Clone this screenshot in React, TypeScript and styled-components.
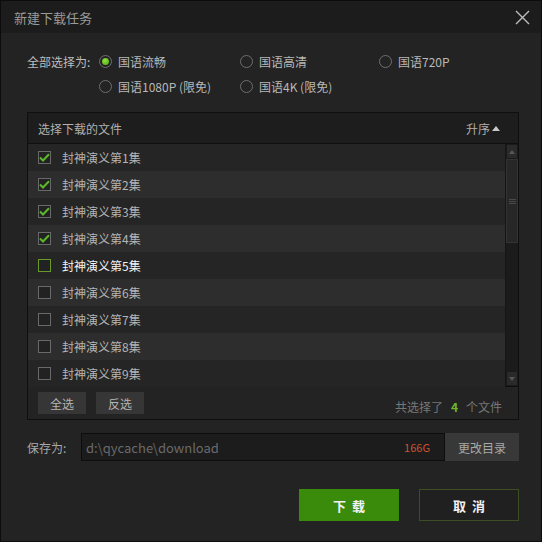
import React from 'react';
import styled, { createGlobalStyle, css } from 'styled-components';

const GlobalStyle = createGlobalStyle`
  html, body {
    margin: 0;
    padding: 0;
    background: #222;
  }
  * {
    box-sizing: border-box;
  }
`;

const FONT = `'Noto Sans CJK SC', 'Microsoft YaHei', 'Liberation Sans', sans-serif`;

const Window = styled.div`
  width: 542px;
  height: 542px;
  background: #232323;
  border: 1px solid #0c0c0c;
  font-family: ${FONT};
  font-size: 12px;
  color: #b8b8b8;
  display: flex;
  flex-direction: column;
`;

const TitleBar = styled.div`
  height: 32px;
  flex: none;
  background: #1c1c1c;
  display: flex;
  align-items: center;
  justify-content: space-between;
  padding: 0 10px 0 13px;
`;

const Title = styled.span`
  font-size: 13px;
  color: #9a9a9a;
`;

const CloseButton = styled.button`
  width: 18px;
  height: 18px;
  padding: 0;
  border: 0;
  background: transparent;
  display: flex;
  align-items: center;
  justify-content: center;
  cursor: pointer;
`;

const Body = styled.div`
  flex: 1;
  display: flex;
  flex-direction: column;
  padding: 16px 22px 0 26px;
`;

const OptionGrid = styled.div`
  display: grid;
  grid-template-columns: 72px 141px 139px auto;
  grid-auto-rows: 25px;
  align-items: center;
`;

const OptionLabel = styled.span`
  color: #bdbdbd;
  white-space: nowrap;
`;

const Option = styled.label<{ $col?: number }>`
  display: flex;
  align-items: center;
  gap: 6px;
  color: #b8b8b8;
  white-space: nowrap;
  cursor: pointer;
  ${({ $col }) =>
    $col &&
    css`
      grid-column: ${$col};
    `}
`;

const Radio = styled.span<{ $checked?: boolean }>`
  width: 13px;
  height: 13px;
  border-radius: 50%;
  border: 1.5px solid #6e6e6e;
  display: flex;
  align-items: center;
  justify-content: center;
  flex: none;
  &::after {
    content: '';
    width: 7px;
    height: 7px;
    border-radius: 50%;
    background: ${({ $checked }) =>
      $checked ? 'radial-gradient(circle at 40% 35%, #8fe040, #4ca60f)' : 'transparent'};
  }
`;

const Panel = styled.div`
  margin-top: 13px;
  border: 1px solid #0f0f0f;
  display: flex;
  flex-direction: column;
`;

const PanelHeader = styled.div`
  height: 31px;
  background: #1d1d1d;
  border-bottom: 1px solid #0f0f0f;
  display: flex;
  align-items: center;
  justify-content: space-between;
  padding: 0 18px 0 10px;
  color: #b0b0b0;
`;

const SortToggle = styled.span`
  display: flex;
  align-items: center;
  gap: 2px;
  color: #b0b0b0;
`;

const ListArea = styled.div`
  display: flex;
  height: 243px;
  border-bottom: 1px solid #0f0f0f;
`;

const FileList = styled.ul`
  flex: 1;
  list-style: none;
  margin: 0;
  padding: 0;
`;

const FileRow = styled.li<{ $alt: boolean; $hover?: boolean }>`
  height: 27px;
  display: flex;
  align-items: center;
  gap: 11px;
  padding-left: 10px;
  background: ${({ $alt }) => ($alt ? '#2d2d2d' : '#252525')};
  color: ${({ $hover }) => ($hover ? '#f4f4f4' : '#b4b4b4')};
`;

const CheckBox = styled.span<{ $hover?: boolean }>`
  width: 13px;
  height: 13px;
  border: 1px solid ${({ $hover }) => ($hover ? '#6a9a2a' : '#696969')};
  background: #222;
  display: flex;
  align-items: center;
  justify-content: center;
  flex: none;
`;

const ScrollBar = styled.div`
  width: 13px;
  flex: none;
  background: #1b1b1b;
  border-left: 1px solid #151515;
  display: flex;
  flex-direction: column;
`;

const ScrollArrow = styled.div`
  height: 15px;
  background: #2a2a2a;
  border: 1px solid #1a1a1a;
  display: flex;
  align-items: center;
  justify-content: center;
`;

const ScrollThumb = styled.div`
  height: 84px;
  background: #272727;
  border: 1px solid #333;
  display: flex;
  align-items: center;
  justify-content: center;
`;

const ScrollTrack = styled.div`
  flex: 1;
`;

const PanelFooter = styled.div`
  height: 32px;
  display: flex;
  align-items: center;
  gap: 10px;
  padding: 0 16px 0 10px;
`;

const SmallButton = styled.button`
  height: 22px;
  width: 48px;
  border: 0;
  background: #363636;
  color: #b4b4b4;
  font-family: ${FONT};
  font-size: 12px;
  padding: 0;
  cursor: pointer;
`;

const SelectedCount = styled.span`
  margin-left: auto;
  color: #777;
  padding-top: 6px;
`;

const Count = styled.b`
  color: #6fb82a;
  margin: 0 8px;
`;

const SaveRow = styled.div`
  margin-top: 13px;
  display: flex;
  align-items: center;
  height: 28px;
`;

const SaveLabel = styled.span`
  width: 54px;
  flex: none;
  color: #a8a8a8;
`;

const PathBox = styled.div`
  flex: 1;
  height: 28px;
  background: #1c1c1c;
  border: 1px solid #0d0d0d;
  display: flex;
  align-items: center;
  justify-content: space-between;
  padding: 0 14px 0 4px;
  font-size: 13px;
  color: #6a6a6a;
`;

const DiskSpace = styled.span`
  color: #d0522e;
  font-size: 11px;
`;

const ChangeDirButton = styled.button`
  width: 74px;
  height: 28px;
  flex: none;
  border: 0;
  background: #383838;
  color: #a8a8a8;
  font-family: ${FONT};
  font-size: 12px;
  padding: 0;
  cursor: pointer;
`;

const Actions = styled.div`
  margin-top: 28px;
  display: flex;
  justify-content: flex-end;
  gap: 20px;
`;

const ActionButton = styled.button<{ $primary?: boolean }>`
  width: 100px;
  height: 32px;
  font-family: ${FONT};
  font-size: 13px;
  font-weight: bold;
  letter-spacing: 6px;
  text-indent: 6px;
  color: #f2f2f2;
  cursor: pointer;
  ${({ $primary }) =>
    $primary
      ? css`
          background: #3a8a0c;
          border: 1px solid #3a8a0c;
        `
      : css`
          background: #202020;
          border: 1px solid #3d4f22;
        `}
`;

const files = Array.from({ length: 9 }, (_, i) => ({
  name: `封神演义第${i + 1}集`,
  checked: i < 4,
}));

const Check = () => (
  <svg width="11" height="9" viewBox="0 0 11 9">
    <path d="M1 4.5 L4 7.5 L10 1.2" fill="none" stroke="#5cb82a" strokeWidth="2" />
  </svg>
);

const App = (): React.ReactElement => {
  return (
    <React.Fragment>
      <GlobalStyle />
      <Window>
        <TitleBar>
          <Title>新建下载任务</Title>
          <CloseButton aria-label="close">
            <svg width="15" height="15" viewBox="0 0 15 15">
              <path d="M1 1 L14 14 M14 1 L1 14" stroke="#bdbdbd" strokeWidth="1.4" />
            </svg>
          </CloseButton>
        </TitleBar>
        <Body>
          <OptionGrid>
            <OptionLabel>全部选择为:</OptionLabel>
            <Option>
              <Radio $checked />
              国语流畅
            </Option>
            <Option>
              <Radio />
              国语高清
            </Option>
            <Option>
              <Radio />
              国语720P
            </Option>
            <Option $col={2}>
              <Radio />
              国语1080P (限免)
            </Option>
            <Option>
              <Radio />
              国语4K (限免)
            </Option>
          </OptionGrid>

          <Panel>
            <PanelHeader>
              <span>选择下载的文件</span>
              <SortToggle>
                升序
                <svg width="8" height="5" viewBox="0 0 8 5">
                  <path d="M0 5 L4 0 L8 5 Z" fill="#c8c8c8" />
                </svg>
              </SortToggle>
            </PanelHeader>
            <ListArea>
              <FileList>
                {files.map((f, i) => (
                  <FileRow key={f.name} $alt={i % 2 === 1} $hover={i === 4}>
                    <CheckBox $hover={i === 4}>{f.checked && <Check />}</CheckBox>
                    {f.name}
                  </FileRow>
                ))}
              </FileList>
              <ScrollBar>
                <ScrollArrow>
                  <svg width="6" height="4" viewBox="0 0 6 4">
                    <path d="M0 4 L3 0 L6 4 Z" fill="#555" />
                  </svg>
                </ScrollArrow>
                <ScrollThumb>
                  <svg width="7" height="5" viewBox="0 0 7 5">
                    <path d="M0 0.5 H7 M0 2.5 H7 M0 4.5 H7" stroke="#4a4a4a" strokeWidth="1" />
                  </svg>
                </ScrollThumb>
                <ScrollTrack />
                <ScrollArrow>
                  <svg width="6" height="4" viewBox="0 0 6 4">
                    <path d="M0 0 L3 4 L6 0 Z" fill="#555" />
                  </svg>
                </ScrollArrow>
              </ScrollBar>
            </ListArea>
            <PanelFooter>
              <SmallButton>全选</SmallButton>
              <SmallButton>反选</SmallButton>
              <SelectedCount>
                共选择了<Count>4</Count>个文件
              </SelectedCount>
            </PanelFooter>
          </Panel>

          <SaveRow>
            <SaveLabel>保存为:</SaveLabel>
            <PathBox>
              <span>d:\qycache\download</span>
              <DiskSpace>166G</DiskSpace>
            </PathBox>
            <ChangeDirButton>更改目录</ChangeDirButton>
          </SaveRow>

          <Actions>
            <ActionButton $primary>下载</ActionButton>
            <ActionButton>取消</ActionButton>
          </Actions>
        </Body>
      </Window>
    </React.Fragment>
  );
};

export default App;
